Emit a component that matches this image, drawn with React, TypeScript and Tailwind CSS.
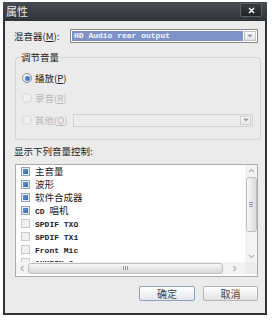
import React from "react";

const cjk = "font-['Noto_Sans_CJK_SC','Noto_Sans',sans-serif]";
const mono = "font-['Liberation_Mono','Noto_Sans_CJK_SC',monospace]";

type Item = { label: React.ReactNode; checked: boolean };

const items: Item[] = [
  { label: <span className={cjk}>主音量</span>, checked: true },
  { label: <span className={cjk}>波形</span>, checked: true },
  { label: <span className={cjk}>软件合成器</span>, checked: true },
  {
    label: (
      <>
        <span className={`${mono} text-[8px] font-bold`}>CD </span>
        <span className={cjk}>唱机</span>
      </>
    ),
    checked: true,
  },
  { label: <span className={`${mono} text-[8px] font-bold`}>SPDIF TXO</span>, checked: false },
  { label: <span className={`${mono} text-[8px] font-bold`}>SPDIF TX1</span>, checked: false },
  { label: <span className={`${mono} text-[8px] font-bold`}>Front Mic</span>, checked: false },
  { label: <span className={`${mono} text-[8px] font-bold`}>AUXPIN 2</span>, checked: false },
];

function Radio({ checked, disabled }: { checked?: boolean; disabled?: boolean }) {
  return (
    <span
      className={
        disabled
          ? "w-[10px] h-[10px] rounded-full border border-[#d6d6d6] bg-[#efefef] shrink-0"
          : "w-[10px] h-[10px] rounded-full border border-[#8f8f8f] bg-gradient-to-br from-white to-[#d8d8d8] flex items-center justify-center shrink-0"
      }
    >
      {checked ? <span className="w-[5px] h-[5px] rounded-full bg-[#3a86d4]" /> : null}
    </span>
  );
}

function Check({ checked }: { checked: boolean }) {
  return checked ? (
    <span className="w-[9px] h-[9px] border border-[#8fa3bb] bg-[#e8eef5] flex items-center justify-center shrink-0">
      <span className="w-[5px] h-[5px] bg-gradient-to-br from-[#5b9be0] to-[#2a69b0]" />
    </span>
  ) : (
    <span className="w-[9px] h-[9px] border border-[#c9c9c9] bg-[#f1f1f1] shrink-0" />
  );
}

function Caret() {
  return (
    <svg width="6" height="4" viewBox="0 0 6 4">
      <path d="M0 0.5 L6 0.5 L3 3.5 Z" fill="#9a9a9a" />
    </svg>
  );
}

function Chevron({ dir }: { dir: "up" | "down" | "left" | "right" }) {
  const d = {
    up: "M1 4 L3.5 1.5 L6 4",
    down: "M1 2 L3.5 4.5 L6 2",
    left: "M4.5 1 L2 3.5 L4.5 6",
    right: "M2.5 1 L5 3.5 L2.5 6",
  }[dir];
  return (
    <svg width="7" height="7" viewBox="0 0 7 7">
      <path d={d} stroke="#b4b4b4" strokeWidth="1.2" fill="none" />
    </svg>
  );
}

export default function App() {
  return (
    <div className="w-[272px] h-[320px] bg-white overflow-hidden">
      <div className="ml-[3px] mt-[2px] w-[264px] h-[313px] bg-[#2f3338] px-[2px] pb-[2px] flex flex-col">
        {/* title bar */}
        <div className="h-[19px] bg-gradient-to-b from-[#474c53] to-[#30343a] flex items-start justify-between pl-[3px] pr-[5px] -mx-[2px] px-[5px]">
          <span className={`${cjk} text-[11px] leading-[19px] text-[#e6e8ea]`}>属性</span>
          <span className="mt-[1px] w-[22px] h-[14px] rounded-[2px] border border-[#5a5f66] bg-gradient-to-b from-[#3a3e44] to-[#1f2226] flex items-center justify-center">
            <svg width="7" height="7" viewBox="0 0 7 7">
              <path d="M1 1 L6 6 M6 1 L1 6" stroke="#f2f2f2" strokeWidth="1.6" />
            </svg>
          </span>
        </div>

        {/* body */}
        <div className={`flex-1 bg-[#ebebeb] pl-[9px] pr-[7px] flex flex-col ${cjk} text-[9.5px] text-[#222]`}>
          {/* mixer */}
          <div className="mt-[8px] h-[14px] flex items-center">
            <span className="w-[56px] leading-[12px]">
              混音器(<span className="underline">M</span>):
            </span>
            <div className="w-[188px] h-[14px] border border-[#8a8a8a] bg-white p-[1px] flex">
              <div className={`flex-1 bg-[#7f93c9] ${mono} text-[8px] font-bold leading-[10px] text-[#f4f5ff] pl-[2px]`}>
                HD Audio rear output
              </div>
              <div className="w-[12px] ml-[1px] border border-[#c4c4c4] bg-gradient-to-b from-white to-[#e2e2e2] flex items-center justify-center">
                <Caret />
              </div>
            </div>
          </div>

          {/* group box */}
          <fieldset className="mt-[8px] ml-[1px] border border-[#d3d3d3] rounded-[3px]">
            <legend className="ml-[4px] px-[1px] leading-[12px]">调节音量</legend>
            <div className="pt-[7px] pb-[11px] pl-[6px] pr-[7px]">
              <div className="h-[16px] flex items-center gap-[3px]">
                <Radio checked />
                <span>
                  播放(<span className="underline">P</span>)
                </span>
              </div>
              <div className="mt-[4px] h-[16px] flex items-center gap-[3px] text-[#b8b8b8]">
                <Radio disabled />
                <span>
                  录音(<span className="underline">R</span>)
                </span>
              </div>
              <div className="mt-[6px] h-[16px] flex items-center gap-[3px] text-[#b8b8b8]">
                <Radio disabled />
                <span className="w-[35px]">
                  其他(<span className="underline">O</span>)
                </span>
                <div className="w-[180px] h-[13px] border border-[#d2d2d2] bg-[#ececec] p-[1px] flex justify-end">
                  <div className="w-[11px] border border-[#cfcfcf] bg-gradient-to-b from-white to-[#e6e6e6] flex items-center justify-center">
                    <Caret />
                  </div>
                </div>
              </div>
            </div>
          </fieldset>

          <div className="mt-[5px] leading-[12px]">显示下列音量控制:</div>

          {/* list */}
          <div className="mt-[7px] ml-[1px] h-[113px] border border-[#ababab] bg-white flex flex-col">
            <div className="flex-1 flex min-h-0">
              <div className="flex-1 overflow-hidden pl-[5px]">
                {items.map((it, i) => (
                  <div key={i} className="h-[13px] flex items-center gap-[5px] text-[9.5px] leading-[13px] whitespace-nowrap">
                    <Check checked={it.checked} />
                    <span>{it.label}</span>
                  </div>
                ))}
              </div>
              <div className="w-[12px] bg-[#f3f3f3] flex flex-col items-center">
                <div className="h-[12px] flex items-center justify-center">
                  <Chevron dir="up" />
                </div>
                <div className="w-[11px] h-[55px] rounded-[3px] border border-[#bdbdbd] bg-gradient-to-r from-[#f7f7f7] to-[#dcdcdc] flex flex-col items-center justify-center gap-[1px]">
                  <span className="w-[4px] h-px bg-[#8c9cb0]" />
                  <span className="w-[4px] h-px bg-[#8c9cb0]" />
                  <span className="w-[4px] h-px bg-[#8c9cb0]" />
                </div>
                <div className="flex-1" />
                <div className="h-[12px] flex items-center justify-center">
                  <Chevron dir="down" />
                </div>
              </div>
            </div>
            <div className="h-[12px] flex mb-[2px]">
              <div className="flex-1 bg-[#f3f3f3] flex items-center">
                <div className="w-[12px] flex items-center justify-center">
                  <Chevron dir="left" />
                </div>
                <div className="w-[195px] h-[11px] rounded-[3px] border border-[#bdbdbd] bg-gradient-to-b from-[#f7f7f7] to-[#d8d8d8] flex items-center justify-center gap-[1px]">
                  <span className="w-px h-[4px] bg-[#8c9cb0]" />
                  <span className="w-px h-[4px] bg-[#8c9cb0]" />
                  <span className="w-px h-[4px] bg-[#8c9cb0]" />
                </div>
                <div className="flex-1 flex items-center justify-center">
                  <Chevron dir="right" />
                </div>
              </div>
              <div className="w-[12px] bg-[#ebebeb]" />
            </div>
          </div>

          {/* buttons */}
          <div className="mt-[9px] flex justify-end gap-[8px]">
            <button className="w-[56px] h-[15px] border border-[#8aa2c4] rounded-[2px] bg-gradient-to-b from-white to-[#e4e6ec] text-[10px] leading-[13px] text-[#444]">
              确定
            </button>
            <button className="w-[55px] h-[15px] border border-[#b3b3b3] rounded-[2px] bg-gradient-to-b from-white to-[#e2e2e2] text-[10px] leading-[13px] text-[#444]">
              取消
            </button>
          </div>
        </div>
      </div>
    </div>
  );
}
